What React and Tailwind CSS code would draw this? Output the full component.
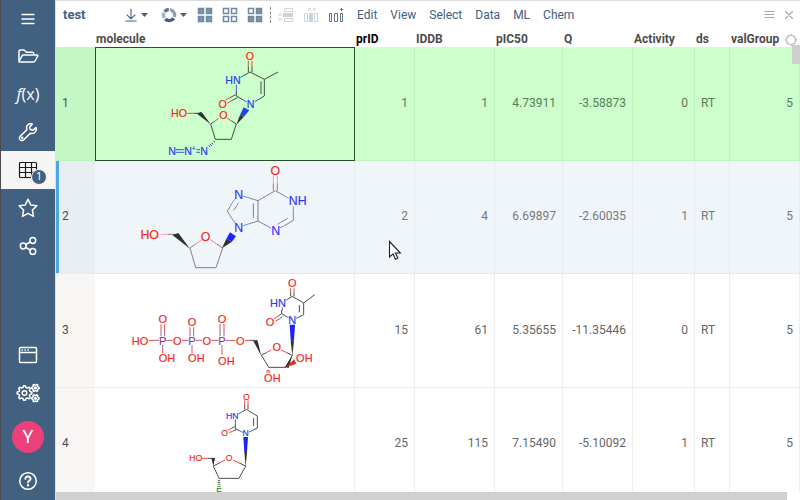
import React from "react";

const BLACK = "#2c332c";
const RED = "#f02a1e";
const BLUE = "#2440e8";

/* ---------- molecules ---------- */

// lines: [colour, path]; wedges: [colour, path]; labels: [x, y, text, colour, size?]
const MOLECULES = {
  azt: {
    viewBox: "3 6 777 339",
    size: 32,
    lines: [
      ["#d0402a", "M463 44V62M474 44V62"],
      [BLACK, "M463 62V78M474 62V78M468 78L511 100L552 78M511 100V150M501 106V144M511 150L498 158M468 78L448 89"],
      [BLUE, "M448 89L440 94M427 116V134M448 162L458 168M498 158L482 167"],
      [BLACK, "M427 134V150L448 162M425 146L408 155M430 155L413 164"],
      ["#d0402a", "M408 155L395 162M413 164L400 172M280 202H300M374 217L362 226M400 217L414 226"],
      [BLACK, "M300 202H318M362 226L350 234L364 280H412L427 234L414 226M359 286L363 288M353 291L358 295"],
      [BLUE, "M348 294L354 300M344 298L348 303M245 311H271M245 319H271M307 311H318M307 319H318"],
    ],
    wedges: [
      [BLACK, "M350 235L322 197L309 203Z"],
      [BLACK, "M427 236L438 207L449 213Z"],
      [BLUE, "M438 207L449 184L466 193L449 213Z"],
    ],
    labels: [
      [468, 31, "O", RED], [417, 102, "HN", BLUE], [470, 175, "N", BLUE], [386, 175, "O", RED],
      [388, 208, "O", RED], [255, 202, "HO", RED], [234, 315, "N", BLUE], [250, 307, "-", BLUE, 20],
      [282, 315, "N", BLUE], [299, 308, "+", BLUE, 20], [330, 315, "N", BLUE],
    ],
  },
  inosine: {
    viewBox: "3 9 777 339",
    size: 37,
    lines: [
      ["#ff9090", "M538 53V76M550 53V76M200 229H222"],
      ["#707070", "M538 76V98M550 76V98M544 98L492 128V189L520 204M478 136V180M544 98L570 113M598 165V187L573 202M581 181L560 193M492 128L466 120M413 137L400 160L413 180M419 157L427 145M492 189L463 198M222 229H243M368 258L386 270L366 329H305L288 270L303 259"],
      ["#7070ff", "M570 113L584 121M598 145V165M573 202L557 210M560 193L550 199M520 204L531 211M466 120L447 114M425 121L413 137M427 145L434 134M413 180L424 196M463 198L447 203"],
      ["#ff7070", "M350 246L368 258M321 247L303 259"],
    ],
    wedges: [
      [BLACK, "M288 272L253 225L235 231Z"],
      [BLACK, "M384 271L397 242L413 252Z"],
      ["#2222ff", "M397 242L408 223L426 235L413 252Z"],
    ],
    labels: [
      [544, 37, "O", RED], [611, 129, "NH", "#3333ff"], [545, 219, "N", "#3333ff"], [434, 110, "N", "#3333ff"],
      [434, 209, "N", "#3333ff"], [335, 236, "O", RED], [167, 229, "HO", RED],
    ],
  },
  triphosphate: {
    viewBox: "3 6 777 339",
    size: 33,
    lines: [
      [RED, "M590 46V58M600 46V58M540 137L550 131M545 144L556 138M165 202H184M228 202H236M264 202H272M316 202H324M352 202H361M406 202H424M453 202H468M201 154V171M212 154V171M288 163V177M299 163V177M378 153V171M390 153V171M206 230V241M294 230V241M384 230V246M532 231L517 239M562 231L578 239M516 297H530M518 292H527"],
      ["#8a4a90", "M184 202H195M217 202H228M272 202H283M305 202H316M361 202H373M395 202H406M201 171V190M212 171V190M288 177V190M299 177V190M378 171V190M390 171V190M206 216V230M294 216V230M384 216V230"],
      [BLACK, "M590 58V70M600 58V70M595 70L629 90L662 65M629 90V125L615 132M616 96V118M595 70L582 78M563 111V122L576 130M563 122L550 131M565 130L556 138M468 202H484M517 239L502 246L524 283H576L595 247L578 239"],
      [BLUE, "M582 78L575 82M565 103V113M576 130L584 134M615 132L606 136"],
    ],
    wedges: [
      [BLACK, "M502 248L478 204L490 201Z"],
      [BLACK, "M595 249L590 202H600Z"],
      ["#2020ff", "M590 202L587 155H603L600 202Z"],
      [BLACK, "M595 247L584 285L573 282Z"],
      [RED, "M576 283L600 259L607 272Z"],
    ],
    labels: [
      [595, 31, "O", RED], [552, 90, "HN", BLUE], [595, 141, "N", BLUE], [528, 148, "O", RED],
      [548, 223, "O", RED], [631, 256, "OH", RED], [535, 315, "OH", RED], [439, 203, "O", RED],
      [384, 203, "P", "#8a3a8c"], [294, 203, "P", "#8a3a8c"], [206, 203, "P", "#8a3a8c"],
      [338, 203, "O", RED], [250, 203, "O", RED], [138, 203, "HO", RED],
      [384, 138, "O", RED], [294, 148, "O", RED], [206, 139, "O", RED],
      [397, 263, "OH", RED], [307, 256, "OH", RED], [219, 256, "OH", RED],
    ],
  },
  fluoro: {
    viewBox: "117 6 777 339",
    size: 26,
    lines: [
      [RED, "M566 43V57M576 43V57M516 133L526 127M520 140L531 135M438 217H456M507 222L492 230M531 222L548 230"],
      [BLACK, "M566 57V70M576 57V70M571 70L604 90V126L590 133M593 96V120M571 70L556 79M538 114V128L550 134M536 122L526 127M541 130L531 135M456 217H472M492 230L472 240L489 277H549L569 240L548 230M486 284H492M485 290H493"],
      [BLUE, "M556 79L548 84M538 100V114M550 134L560 139M590 133L579 138"],
      ["#3c9a3c", "M484 296H494M483 302H495"],
    ],
    wedges: [
      [BLACK, "M472 241L466 216H477Z"],
      [BLACK, "M569 242L565 198H573Z"],
      ["#2020ff", "M565 198L562 153H576L573 198Z"],
    ],
    labels: [
      [571, 32, "O", RED], [529, 90, "HN", BLUE], [569, 142, "N", BLUE], [506, 142, "O", RED],
      [519, 217, "O", RED], [419, 217, "HO", RED], [489, 316, "F", "#23802a"],
    ],
  },
};

function Molecule({ name }) {
  const m = MOLECULES[name];
  return (
    <svg viewBox={m.viewBox} className="block h-[113px] w-[259px]" role="img" aria-label={name}>
      {m.lines.map(([color, d], i) => (
        <path key={i} d={d} stroke={color} strokeWidth="2.6" fill="none" />
      ))}
      {m.wedges.map(([color, d], i) => (
        <path key={i} d={d} fill={color} />
      ))}
      {m.labels.map(([x, y, text, color, size = m.size], i) => (
        <text key={i} x={x} y={y + size * 0.36} fontSize={size} fill={color} stroke={color} strokeWidth="0.5" textAnchor="middle" fontFamily="'Liberation Sans', sans-serif">
          {text}
        </text>
      ))}
    </svg>
  );
}

/* ---------- icons ---------- */

function Icon({ size = 20, width = size, children, stroke = 1.5 }) {
  return (
    <svg width={width} height={size} viewBox={`0 0 ${width} ${size}`} fill="none" stroke="currentColor" strokeWidth={stroke} strokeLinejoin="round" strokeLinecap="round" aria-hidden="true">
      {children}
    </svg>
  );
}

const gearPath = (cx, cy, r, teeth) => {
  const pts = [];
  for (let i = 0; i < teeth * 4; i++) {
    const a = ((i - 0.5) * Math.PI * 2) / (teeth * 4);
    const rad = i % 4 < 2 ? r : r * 0.76;
    pts.push(`${(cx + rad * Math.cos(a)).toFixed(2)} ${(cy + rad * Math.sin(a)).toFixed(2)}`);
  }
  return `M${pts.join("L")}Z`;
};

const MenuIcon = () => <Icon stroke={1.4}><path d="M4 5.5H16M4 10H16M4 14.5H16" /></Icon>;
const FolderIcon = () => (
  <Icon width={22}><path d="M2 15.5V5.2Q2 4 3.2 4H7.2L9.4 6.3H15.5Q16.7 6.3 16.7 7.5V9M2 15.5L5 9.9Q5.4 9 6.4 9H20Q21.3 9 20.7 10.1L18.1 15Q17.6 16 16.5 16H2.8Q1.6 16 2 15.5Z" /></Icon>
);
const WrenchIcon = () => (
  <Icon><path d="M18 5.6L14.9 8.2L12.3 7.6L11.7 5L14.4 2.1C12.2 1.2 9.9 2 8.9 4.1C8.4 5.3 8.5 6.5 8.9 7.7L2.2 14.2C1.2 15.3 1.3 16.9 2.2 17.8C3.2 18.8 4.8 18.8 5.8 17.8L12.3 11.2C14.2 11.9 16.3 11.3 17.5 9.6C18.3 8.4 18.5 6.9 18 5.6Z" /><circle cx="4.2" cy="15.8" r=".5" /></Icon>
);
const TableIcon = () => (
  <Icon stroke={1.2}><rect x="1.5" y="2.5" width="17" height="15" rx="1" /><path d="M1.5 7.5H18.5M1.5 12.5H18.5M7.5 2.5V17.5M13.5 2.5V17.5" /></Icon>
);
const StarIcon = () => (
  <Icon><path d="M10 1.2L12.7 6.9L18.9 7.7L14.4 12L15.5 18.3L10 15.3L4.5 18.3L5.6 12L1.1 7.7L7.3 6.9Z" /></Icon>
);
const ShareIcon = () => (
  <Icon><circle cx="5.2" cy="10" r="2.9" /><circle cx="14.8" cy="4.5" r="2.9" /><circle cx="14.8" cy="15.5" r="2.9" /><path d="M7.8 8.5L12.2 6M7.8 11.5L12.2 14" /></Icon>
);
const WindowIcon = () => (
  <Icon><rect x="1.5" y="2.5" width="17" height="15" rx="1.2" /><path d="M1.5 7.5H18.5M4 5H4.4M7 5H7.4M10 5H10.4" /></Icon>
);
const GearsIcon = () => (
  <Icon width={24}>
    <path d={gearPath(8.5, 10, 7.4, 8)} /><circle cx="8.5" cy="10" r="2.3" />
    <path d={gearPath(19.4, 4.9, 3.7, 6)} /><circle cx="19.4" cy="4.9" r=".9" />
    <path d={gearPath(19.4, 15.3, 3.7, 6)} /><circle cx="19.4" cy="15.3" r=".9" />
  </Icon>
);
const HelpIcon = () => (
  <Icon><circle cx="10" cy="10" r="8.3" /><path d="M7.4 7.8C7.6 4.7 12.8 4.8 12.6 7.9C12.5 9.6 10 9.7 10 11.4" strokeWidth="1.9" /><path d="M10 14.2V14.4" strokeWidth="2.2" /></Icon>
);

const DownloadIcon = () => (
  <Icon size={16} width={12} stroke={1.1}><path d="M6 2V11.5M2 7.8L6 11.8L10 7.8M.8 14H11.2" /></Icon>
);
const Caret = () => (
  <svg width="7" height="4" viewBox="0 0 7 4" aria-hidden="true"><path d="M0 0H7L3.5 4Z" fill="currentColor" /></svg>
);
const RingIcon = () => (
  <svg width="16" height="16" viewBox="0 0 16 16" fill="none" strokeWidth="3.4" aria-hidden="true">
    <path d="M9 2.6A5.5 5.5 0 0 1 13.2 10" stroke="#8d9fb3" />
    <path d="M12.7 11.2A5.5 5.5 0 0 1 4.2 12" stroke="#42607f" />
    <path d="M3.4 11A5.5 5.5 0 0 1 3 5.8" stroke="#a5b3c2" />
    <path d="M3.6 4.7A5.5 5.5 0 0 1 7.8 2.5" stroke="#5c7590" />
  </svg>
);
const GridIcon = ({ fills }) => (
  <svg width="16" height="16" viewBox="0 0 16 16" stroke="#7088a0" aria-hidden="true">
    {[[1.5, 1.5], [9.5, 1.5], [1.5, 9.5], [9.5, 9.5]].map(([x, y], i) => (
      <rect key={i} x={x} y={y} width="5" height="5" strokeWidth="1.5" fill={fills[i] ? "#7e95ad" : "#fff"} />
    ))}
  </svg>
);
const RemoveRowsIcon = () => (
  <svg width="16" height="16" viewBox="0 0 16 16" fill="none" stroke="#cbd3dc" aria-hidden="true">
    <path d="M6.5 1.5H14.5V4.5H6.5ZM6.5 11.5H14.5V14.5H6.5Z" /><path d="M5 8H15" strokeWidth="4" />
    <path d="M.8 6.2L3.6 9M3.6 6.2L.8 9M.8 11L3.6 13.8M3.6 11L.8 13.8" />
  </svg>
);
const RemoveColsIcon = () => (
  <svg width="16" height="16" viewBox="0 0 16 16" fill="none" stroke="#cbd3dc" aria-hidden="true">
    <path d="M1.5 6.5H4.5V14.5H1.5ZM11.5 6.5H14.5V14.5H11.5Z" /><path d="M8 6V15" strokeWidth="4" />
    <path d="M5.5 1L8 3.5M8 1L5.5 3.5M10 1L12.5 3.5M12.5 1L10 3.5" />
  </svg>
);
const AddColIcon = () => (
  <svg width="16" height="16" viewBox="0 0 16 16" fill="none" stroke="#5c7590" aria-hidden="true">
    <path d="M1.5 6.5H3.5V14.5H1.5ZM6.5 6.5H9.5V14.5H6.5ZM12.5 6.5H14.5V14.5H12.5ZM13.5 .8V4.2M11.8 2.5H15.2" />
  </svg>
);

/* ---------- side bar ---------- */

function SideButton({ label, active, children }) {
  return (
    <button
      aria-label={label}
      className={`relative flex h-[38px] w-full items-center justify-center ${active ? "bg-[#f7f5f3] text-[#1c1c1c]" : "text-white"}`}
    >
      {children}
    </button>
  );
}

function SideBar() {
  return (
    <nav className="flex w-14 shrink-0 flex-col border-r border-l border-r-[#dfe1e3] border-l-[#4b4b4b] bg-[#42607f]">
      <button aria-label="Menu" className="flex h-[37px] w-full items-center justify-center text-white"><MenuIcon /></button>
      <SideButton label="Open"><FolderIcon /></SideButton>
      <SideButton label="Functions">
        <span className="font-['Open_Sans',sans-serif] text-base leading-5 font-medium"><i>f</i>(x)</span>
      </SideButton>
      <SideButton label="Tools"><WrenchIcon /></SideButton>
      <SideButton label="Tables" active>
        <TableIcon />
        <span className="absolute right-2 bottom-1 flex size-4 items-center justify-center rounded-full border border-[#f7f5f3] bg-[#42607f] text-[10px] leading-none text-white">1</span>
      </SideButton>
      <SideButton label="Favorites"><StarIcon /></SideButton>
      <SideButton label="Share"><ShareIcon /></SideButton>
      <div className="mt-auto flex flex-col items-center">
        <SideButton label="Windows"><WindowIcon /></SideButton>
        <SideButton label="Settings"><GearsIcon /></SideButton>
        <button aria-label="Profile" className="my-[9px] flex size-8 items-center justify-center rounded-full bg-[#ec407a] text-lg text-white">Y</button>
        <SideButton label="Help"><HelpIcon /></SideButton>
      </div>
    </nav>
  );
}

/* ---------- ribbon ---------- */

const MENUS = ["Edit", "View", "Select", "Data", "ML", "Chem"];

function Ribbon() {
  return (
    <header className="flex h-[29px] shrink-0 items-center border-t border-[#dcdcdc] pr-1.5 pl-[7px] text-[#42607f]">
      <h1 className="w-[62px] text-[13px] font-bold">test</h1>
      <button aria-label="Download" className="flex w-9 items-center gap-1"><DownloadIcon /><Caret /></button>
      <button aria-label="Layout" className="flex w-9 items-center gap-[3px]"><RingIcon /><Caret /></button>
      <div className="flex items-center gap-[9px]">
        <button aria-label="Select all"><GridIcon fills={[1, 1, 1, 1]} /></button>
        <button aria-label="Select none"><GridIcon fills={[0, 0, 0, 0]} /></button>
        <button aria-label="Invert selection"><GridIcon fills={[0, 1, 1, 1]} /></button>
      </div>
      <div className="mx-[7px] h-4 border-l border-dashed border-[#888]" />
      <div className="flex items-center gap-[9px]">
        <button aria-label="Remove rows"><RemoveRowsIcon /></button>
        <button aria-label="Remove columns"><RemoveColsIcon /></button>
        <button aria-label="Add column"><AddColIcon /></button>
      </div>
      <div className="ml-[13px] flex items-center gap-[13px] text-xs">
        {MENUS.map((m) => (
          <button key={m}>{m}</button>
        ))}
      </div>
      <div className="ml-auto flex items-center gap-[9px] text-[#a3a5b0]">
        <button aria-label="View menu"><Icon size={12} width={11} stroke={1}><path d="M1 2.5H10M1 5.5H10M1 8.5H10" /></Icon></button>
        <button aria-label="Close"><Icon size={10} stroke={1.1}><path d="M1.5 1.5L8.5 8.5M8.5 1.5L1.5 8.5" /></Icon></button>
      </div>
    </header>
  );
}

/* ---------- grid ---------- */

const ROWS = [
  { id: 1, mol: "azt", cells: ["1", "1", "4.73911", "-3.58873", "0", "RT", "5"] },
  { id: 2, mol: "inosine", cells: ["2", "4", "6.69897", "-2.60035", "1", "RT", "5"] },
  { id: 3, mol: "triphosphate", cells: ["15", "61", "5.35655", "-11.35446", "0", "RT", "5"] },
  { id: 4, mol: "fluoro", cells: ["25", "115", "7.15490", "-5.10092", "1", "RT", "5"] },
];

const ROW_STYLES = {
  1: { row: "bg-[#ccffcc] text-[#568056]", head: "bg-[#c5f7c4] text-[#3f5a3f]", line: "border-[#c0f2c0]", height: "h-[114px]" },
  2: { row: "bg-[#f0f5fa] text-[#777a7d]", head: "bg-[#e9eef2] text-[#4d4d4d] shadow-[inset_3px_0_0_#4ba9df]", line: "border-[#e6ebf0]", height: "h-[113px]" },
  3: { row: "bg-white text-[#666]", head: "bg-[#f7f6f4] text-[#4d4d4d]", line: "border-[#eee]", height: "h-[114px]" },
  4: { row: "bg-white text-[#666]", head: "bg-[#f7f6f4] text-[#4d4d4d]", line: "border-[#eee]", height: "h-[113px]" },
};

const HEADERS = ["prID", "IDDB", "pIC50", "Q", "Activity", "ds"];

function Grid() {
  return (
    <div className="relative min-h-0 flex-1 overflow-hidden">
      <table className="w-full table-fixed border-separate border-spacing-0 text-xs">
        <colgroup>
          <col className="w-[39px]" />
          <col className="w-[260px]" />
          <col className="w-[60px]" />
          <col className="w-[80px]" />
          <col className="w-[68px]" />
          <col className="w-[70px]" />
          <col className="w-[62px]" />
          <col className="w-[35px]" />
          <col />
        </colgroup>
        <thead className="text-left text-[#4d4d4d]">
          <tr className="h-[18px] leading-[15px]">
            <td />
            <th className="p-0 pt-[3px] pl-px">molecule</th>
            {HEADERS.map((h) => (
              <th key={h} className={`p-0 pt-[3px] pl-px ${h === "prID" ? "text-black" : ""}`}>{h}</th>
            ))}
            <th className="p-0 pt-[3px] pl-px">
              <div className="flex items-center justify-between pr-[3px]">
                valGroup
                <button aria-label="Grid settings" className="text-[#a9a9ad]">
                  <Icon size={12} stroke={1}><path d={gearPath(6, 6, 5.4, 8)} /></Icon>
                </button>
              </div>
            </th>
          </tr>
        </thead>
        <tbody>
          {ROWS.map(({ id, mol, cells }) => {
            const s = ROW_STYLES[id];
            return (
              <tr key={id} className={`${s.row} ${s.height}`}>
                <th scope="row" className={`border-b p-0 pb-0.5 pl-1.5 text-left font-normal ${s.head} ${s.line}`}>{id}</th>
                <td className={`border-r border-b p-0 ${s.line} ${id === 1 ? "outline-1 -outline-offset-1 outline-[#2f4a2f]" : ""}`}>
                  <div className="h-[112px] overflow-hidden"><Molecule name={mol} /></div>
                </td>
                {cells.map((c, i) => (
                  <td key={i} className={`border-r border-b px-1.5 pt-0 pb-0.5 ${s.line} ${c === "RT" ? "text-left" : "text-right"}`}>{c}</td>
                ))}
              </tr>
            );
          })}
        </tbody>
      </table>
      <div className="absolute top-4 right-0 h-[19px] w-2 bg-[#cfcfcf]" />
    </div>
  );
}

export default function App() {
  return (
    <div className="relative flex h-screen overflow-hidden bg-white font-[Roboto,sans-serif]">
      <SideBar />
      <main className="flex min-w-0 flex-1 flex-col">
        <Ribbon />
        <Grid />
        <div className="h-2 shrink-0 pr-[13px]">
          <div className="h-full bg-[#d0d0d0]" />
        </div>
      </main>
      <svg className="absolute top-[240px] left-[388px]" width="14" height="21" viewBox="0 0 14 21" aria-hidden="true">
        <path d="M1.5 1.5V17L5 13.8L7.4 19.2L9.8 18.1L7.5 13H12.4Z" fill="#fff" stroke="#222" strokeWidth="1.1" />
      </svg>
    </div>
  );
}
